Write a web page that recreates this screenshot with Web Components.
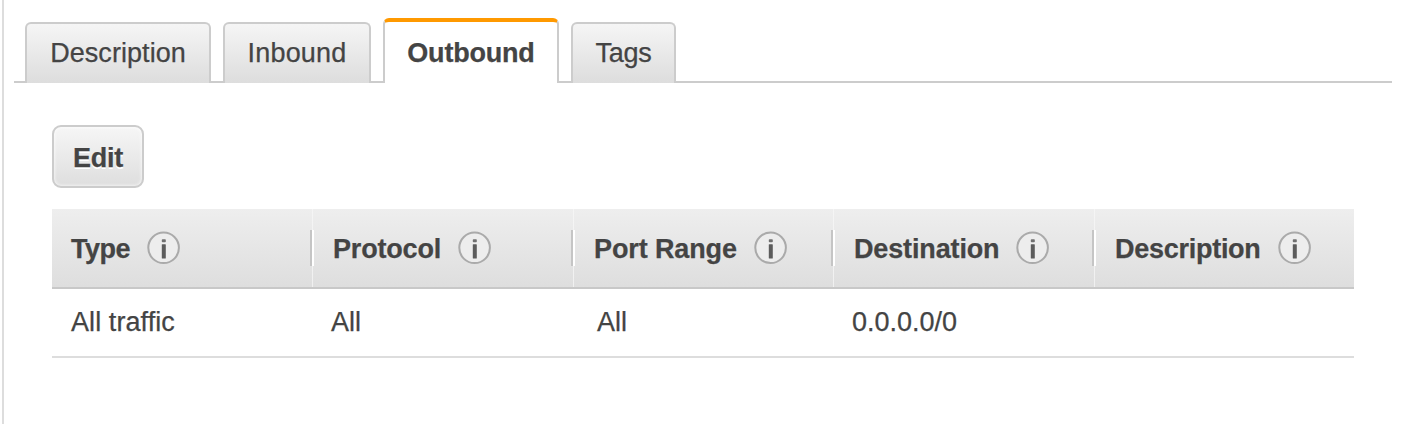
<!DOCTYPE html>
<html lang="en">
<head>
<meta charset="utf-8">
<title>Security group rules</title>
<style>
body{margin:0;background:#fff;font-family:"Liberation Sans",Arial,sans-serif;font-size:27px;line-height:32px;color:#444;-webkit-text-stroke:.25px #444}
</style>
</head>
<body>
<detail-panel>
  <tab-bar slot="tabs">
    <tab-item style="width:186px;--ls:.06px">Description</tab-item>
    <tab-item style="width:148px;--ls:.2px">Inbound</tab-item>
    <tab-item active style="width:176px;--ls:-.2px">Outbound</tab-item>
    <tab-item style="width:105px;--ls:-.2px">Tags</tab-item>
  </tab-bar>
  <push-button>Edit</push-button>
  <rule-table>
    <head-cell slot="head" style="--ls:-.5px">Type</head-cell>
    <head-cell slot="head" divided style="--ls:-.18px">Protocol</head-cell>
    <head-cell slot="head" divided style="--ls:-.12px">Port Range</head-cell>
    <head-cell slot="head" divided style="--ls:-.14px">Destination</head-cell>
    <head-cell slot="head" divided style="--ls:-.27px">Description</head-cell>
    <body-cell style="--ls:.08px">All traffic</body-cell>
    <body-cell>All</body-cell>
    <body-cell style="--indent:24px">All</body-cell>
    <body-cell>0.0.0.0/0</body-cell>
    <body-cell></body-cell>
  </rule-table>
</detail-panel>
<script>
function define(name, html) {
  const template = document.createElement('template');
  template.innerHTML = html;
  customElements.define(name, class extends HTMLElement {
    constructor() {
      super();
      this.attachShadow({mode: 'open'}).append(template.content.cloneNode(true));
    }
  });
}

define('detail-panel', `<style>
:host{display:block;box-sizing:border-box;height:424px;margin-left:2px;border-left:2px solid #ddd;padding:18px 24px 0 10px}
main{padding:42px 38px 0}
</style><slot name="tabs"></slot><main><slot></slot></main>`);

define('tab-bar', `<style>
:host{display:flex;align-items:flex-end;gap:12px;height:65px;box-sizing:border-box;padding-left:11px;
background:linear-gradient(#ccc,#ccc) bottom/100% 2px no-repeat}
</style><slot></slot>`);

define('tab-item', `<style>
:host{display:flex;justify-content:center;box-sizing:border-box;height:61px;padding-top:13px;border:2px solid #ccc;border-bottom:0;border-radius:6px 6px 0 0;
background:linear-gradient(#f5f5f5,#ddd);letter-spacing:var(--ls,0);white-space:nowrap}
:host([active]){height:65px;padding-top:15px;border-top:4px solid #ff9900;background:#fff;font-weight:bold}
</style><slot></slot>`);

define('push-button', `<style>
:host{display:block}
button{display:block;box-sizing:border-box;width:92px;height:63px;padding:2px 0 0;border:2px solid #ccc;border-radius:9px;
background:linear-gradient(#f6f6f6,#dedede);box-shadow:inset 0 0 3px 1px rgba(255,255,255,.6);
font:bold 27px/32px "Liberation Sans",Arial,sans-serif;letter-spacing:-.3px;color:#444;text-shadow:0 2px 0 #fff}
</style><button><slot></slot></button>`);

define('rule-table', `<style>
:host{display:block;margin-top:21px}
.row{display:grid;grid-template-columns:260px 261px 260px 261px 260px}
.head{height:80px;box-sizing:border-box;border-bottom:2px solid #c8c8c8;background:linear-gradient(#eee,#dedede)}
.body{height:69px;box-sizing:border-box;border-bottom:2px solid #ddd}
</style><div class="row head"><slot name="head"></slot></div><div class="row body"><slot></slot></div>`);

define('head-cell', `<style>
:host{display:flex;align-items:flex-start;box-sizing:border-box;font-weight:bold;padding-left:19px;white-space:nowrap}
.label{display:block;padding-top:24px;letter-spacing:var(--ls,0)}
info-icon{margin:22px 0 0 17px}
.rule{display:none;flex:none;width:2px;height:36px;margin:21px 19px 0 -2px;background:#c5c5c5;border-right:2px solid #fff}
:host([divided]){padding-left:0;background:linear-gradient(#f5f5f5,#f0f0f0) 0 0/1px 100% no-repeat}
:host([divided]) .rule{display:block}
</style><span class="rule"></span><span class="label"><slot></slot></span><info-icon></info-icon>`);

define('info-icon', `<style>
:host{display:block;flex:none;width:34px;height:34px}
svg{display:block}
</style><svg width="34" height="34" viewBox="0 0 34 34"><circle cx="16.6" cy="16.8" r="15.3" fill="#ededed" stroke="#aaa" stroke-width="2"/><rect x="14.8" y="8.2" width="4" height="3" rx=".8" fill="#707070"/><rect x="14.8" y="13.2" width="4" height="14.4" rx=".6" fill="#5c5c5c"/></svg>`);

define('body-cell', `<style>
:host{display:block;padding:17px 0 0 var(--indent,19px);letter-spacing:var(--ls,0);white-space:nowrap}
</style><slot></slot>`);
</script>
</body>
</html>
